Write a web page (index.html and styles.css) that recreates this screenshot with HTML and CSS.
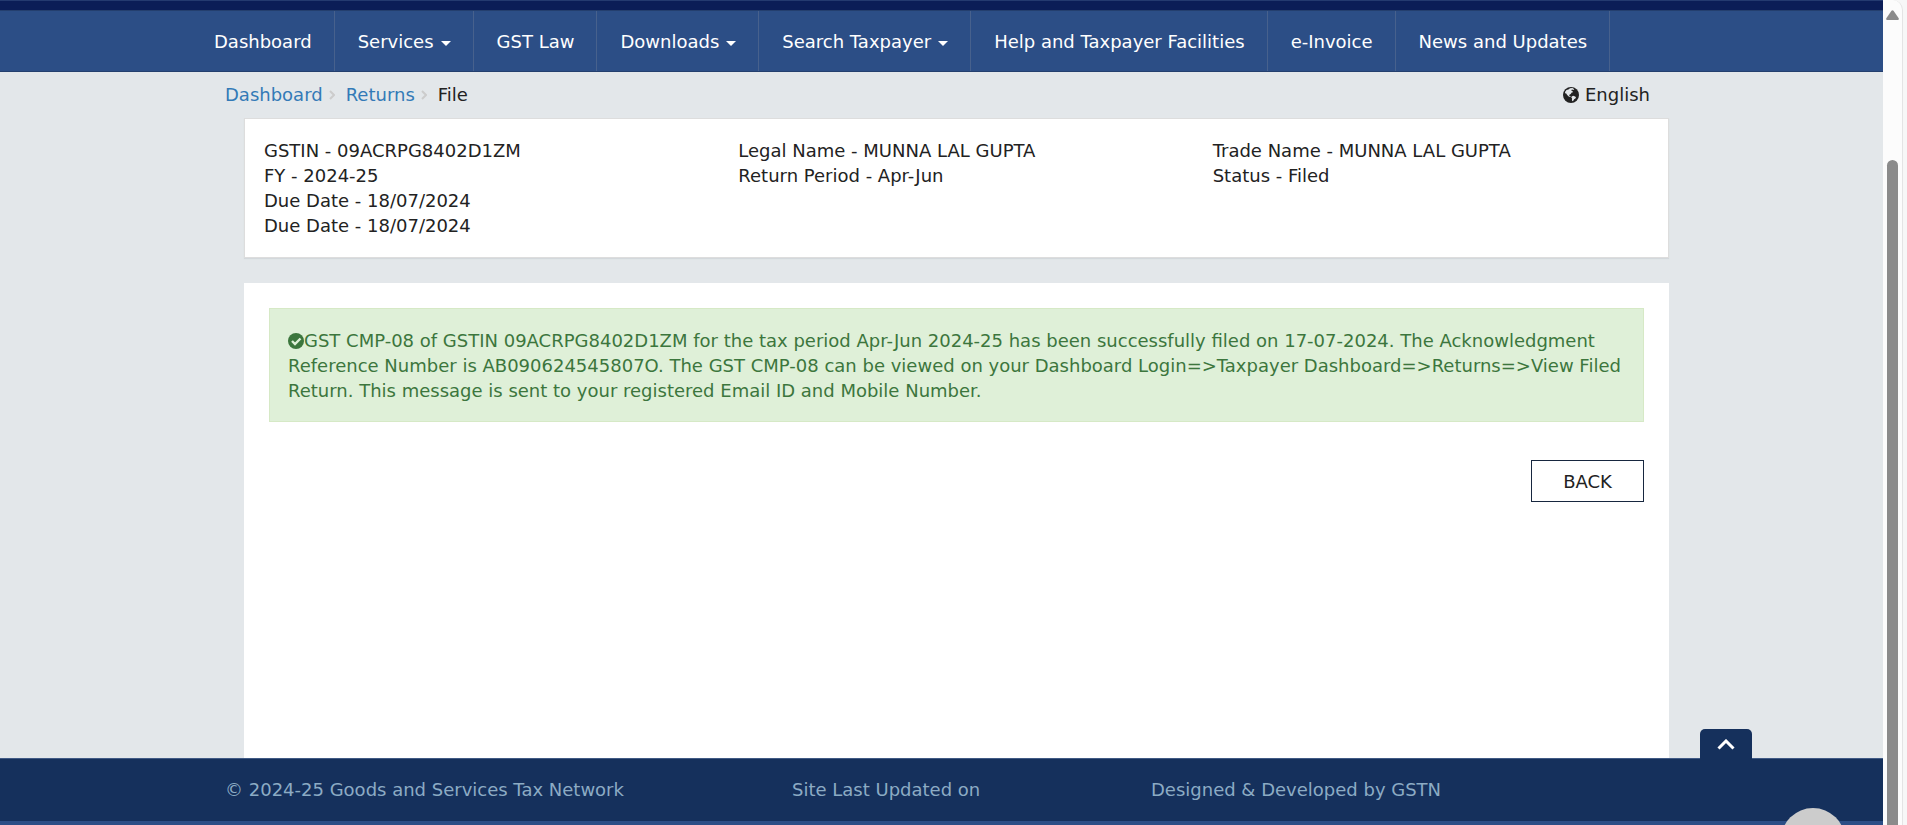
FILE: index.html
```html
<!DOCTYPE html>
<html lang="en">
<head>
<meta charset="utf-8">
<title>GST CMP-08 - File</title>
<link rel="stylesheet" href="styles.css">
</head>
<body>
<div class="page">
  <header class="header">
    <div class="strip"></div>
    <nav class="nav" aria-label="Main">
      <a href="#">Dashboard</a>
      <a href="#">Services<span class="caret"></span></a>
      <a href="#">GST Law</a>
      <a href="#">Downloads<span class="caret"></span></a>
      <a href="#">Search Taxpayer<span class="caret"></span></a>
      <a href="#">Help and Taxpayer Facilities</a>
      <a href="#">e-Invoice</a>
      <a href="#">News and Updates</a>
    </nav>
  </header>
  <main class="content">
    <div class="crumb-row">
      <nav class="crumbs" aria-label="Breadcrumb">
        <a href="#">Dashboard</a>
        <svg class="sep" viewBox="0 0 6 10"><path d="M1 1l4 4-4 4"/></svg>
        <a href="#">Returns</a>
        <svg class="sep" viewBox="0 0 6 10"><path d="M1 1l4 4-4 4"/></svg>
        <span>File</span>
      </nav>
      <button class="language" type="button">
        <svg class="globe" viewBox="0 0 16 16"><circle cx="8" cy="8" r="8" fill="#222"/><path fill="#e3e7ea" d="M7 1.300l2.500-.2 1.800 1.100-.9.900-1.500-.5-.7 1.200 1.200.2.600 1.200-1.300.4-1 1.400-1.300.7-.2 1 1.500.6-.4.700-1.600-.5-1.500-1.600L3 6.300l-.8.200-.2-1.500L3.500 3l1.900-.4zM8.700 9.400l1.500-.6 1.900.7.900.7-.6 1.300-1.300.8-.6 1.300-1.300.6-.3-1.600.2-1.200-.8-1z"/></svg>
        English
      </button>
    </div>
    <section class="info">
      <div>
        <p>GSTIN - 09ACRPG8402D1ZM</p>
        <p>FY - 2024-25</p>
        <p>Due Date - 18/07/2024</p>
        <p>Due Date - 18/07/2024</p>
      </div>
      <div>
        <p>Legal Name - MUNNA LAL GUPTA</p>
        <p>Return Period - Apr-Jun</p>
      </div>
      <div>
        <p>Trade Name - MUNNA LAL GUPTA</p>
        <p>Status - Filed</p>
      </div>
    </section>
    <section class="panel">
      <p class="alert" role="alert"><svg class="check" viewBox="0 0 16 16"><circle cx="8" cy="8" r="8" fill="#3c763d"/><path d="M4 8l3 3 5.500-5.500" fill="none" stroke="#dff0d8" stroke-width="2.400"/></svg>GST CMP-08 of GSTIN 09ACRPG8402D1ZM for the tax period Apr-Jun 2024-25 has been successfully filed on 17-07-2024. The Acknowledgment Reference Number is AB090624545807O. The GST CMP-08 can be viewed on your Dashboard Login=&gt;Taxpayer Dashboard=&gt;Returns=&gt;View Filed Return. This message is sent to your registered Email ID and Mobile Number.</p>
      <button class="back" type="button">BACK</button>
    </section>
  </main>
  <footer class="footer">
    <button class="to-top" type="button" aria-label="Back to top"><svg viewBox="0 0 18 11"><path d="M1.500 9.500L9 2l7.500 7.500"/></svg></button>
    <div class="footer-row">
      <span>© 2024-25 Goods and Services Tax Network</span>
      <span>Site Last Updated on</span>
      <span>Designed &amp; Developed by GSTN</span>
    </div>
    <button class="chat" type="button" aria-label="Chat"><svg viewBox="0 0 64 17"><circle cx="32" cy="32" r="32"/></svg></button>
  </footer>
</div>
<div class="scroll" aria-hidden="true">
  <div class="track">
    <svg class="arrow" viewBox="0 0 13 10"><path d="M5.500.8q1-1.200 2 0L12.700 8.200q.6 1.600-.9 1.800H1.200Q-.3 9.800.3 8.200z"/></svg>
    <div class="thumb"></div>
  </div>
</div>
</body>
</html>
```

FILE: styles.css
```css
* { box-sizing: border-box; }
body {
  margin: 0;
  height: 100vh;
  display: flex;
  overflow: hidden;
  background: #f7f7f7;
  font: 18px/25px Verdana, "DejaVu Sans", sans-serif;
  color: #222;
}
p { margin: 0; }
a { text-decoration: none; }
button { font: inherit; color: inherit; cursor: pointer; }

.page {
  flex: 1;
  min-width: 0;
  display: flex;
  flex-direction: column;
  background: #e3e7ea;
}

.header {
  background: #2c4e86;
  border-bottom: 1px solid #243f6e;
}
.strip {
  height: 11px;
  background: #0b1d57;
  border-top: 1px solid #243a70;
  border-bottom: 1px solid #243f6e;
}
.nav {
  max-width: 1501px;
  margin: 0 auto;
  display: flex;
}
.nav a {
  display: flex;
  align-items: center;
  gap: 7px;
  height: 60px;
  padding: 1px 22px 0 23px;
  border-right: 1px solid #47618d;
  color: #fff;
  white-space: nowrap;
}
.caret {
  border: 5px solid transparent;
  border-top-color: #fff;
  border-bottom: 0;
  margin-top: 3px;
}

.content {
  flex: 1;
  width: 100%;
  max-width: 1463px;
  margin: 0 auto;
  display: flex;
  flex-direction: column;
}
.crumb-row {
  display: flex;
  justify-content: space-between;
  padding: 10px 23px 11px 15px;
}
.crumbs { display: flex; align-items: center; }
.crumbs a { color: #337ab7; }
.sep {
  width: 6px;
  height: 10px;
  margin: 0 11px 0 6px;
  fill: none;
  stroke: #ccc;
  stroke-width: 2;
}
.language {
  display: flex;
  align-items: center;
  gap: 6px;
  padding: 0;
  border: 0;
  background: none;
}
.globe { width: 16px; height: 16px; }

.info {
  display: grid;
  grid-template-columns: repeat(3, 1fr);
  margin: 0 4px 0 34px;
  padding: 19px 0;
  background: #fff;
  border: 1px solid #ddd;
  box-shadow: 0 1px 1px #d3d8dc;
}
.info div { padding-left: 19px; }

.panel {
  flex: 1;
  display: flex;
  flex-direction: column;
  align-items: flex-end;
  gap: 38px;
  margin: 25px 4px 0 34px;
  padding: 25px;
  background: #fff;
}
.alert {
  width: 100%;
  padding: 19px 18px 18px;
  border: 1px solid #d6e9c6;
  background: #dff0d8;
  color: #3c763d;
}
.check {
  width: 16px;
  height: 16px;
  vertical-align: -2px;
}
.back {
  width: 113px;
  height: 42px;
  border: 1px solid #17273f;
  background: #fff;
}

.footer {
  position: relative;
  height: 67px;
  background: #15305c;
  border-top: 1px solid #405a85;
  border-bottom: 4px solid #2c4e86;
  color: #8cabc4;
}
.footer-row {
  display: grid;
  grid-template-columns: 567px 359px 1fr;
  max-width: 1463px;
  margin: 0 auto;
  padding: 18px 15px;
}
.to-top {
  position: absolute;
  right: 131px;
  bottom: 100%;
  width: 52px;
  height: 30px;
  padding: 0;
  border: 0;
  border-radius: 5px 5px 0 0;
  background: #15305c;
}
.to-top svg {
  display: block;
  width: 18px;
  height: 11px;
  margin: 0 auto;
  fill: none;
  stroke: #fff;
  stroke-width: 3;
}
.chat {
  position: absolute;
  right: 38px;
  bottom: -4px;
  width: 64px;
  height: 17px;
  padding: 0;
  border: 0;
  background: none;
}
.chat svg { display: block; width: 64px; height: 17px; fill: #ccc; }

.scroll { width: 24px; background: #f7f7f7; }
.track {
  width: 20px;
  height: 100%;
  display: flex;
  flex-direction: column;
  align-items: center;
  padding-top: 10px;
  background: #fcfcfc;
  border-right: 1px solid #e4e4e4;
  border-radius: 0 10px 0 0;
}
.arrow { width: 13px; height: 10px; fill: #8b8b8b; }
.thumb {
  flex: 1;
  width: 11px;
  margin-top: 140px;
  border-radius: 6px 6px 0 0;
  background: #8b8b8b;
}
```
